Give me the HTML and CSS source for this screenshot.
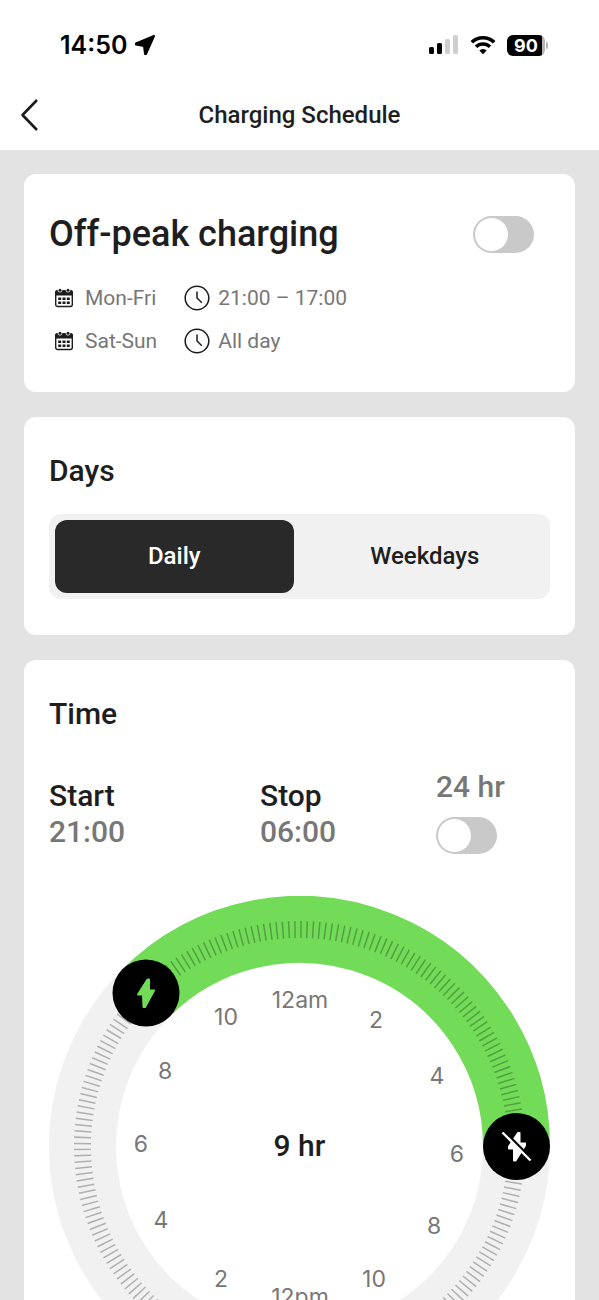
FILE: index.html
```html
<!DOCTYPE html>
<html lang="en">
<head>
<meta charset="utf-8">
<meta name="viewport" content="width=device-width, initial-scale=1">
<title>Charging Schedule</title>
<link rel="stylesheet" href="styles.css">
</head>
<body>
<div class="app">
  <header class="top">
    <div class="status">
      <div class="status-side">
        <span class="clock">14:50</span>
        <svg class="location" viewBox="0 0 20 20" aria-hidden="true"><path d="M19 1 1 8.500v1L9 11l1 8h1z"/></svg>
      </div>
      <div class="status-side">
        <svg class="signal" viewBox="0 0 30 20" aria-hidden="true">
          <rect x="0" y="12" width="5" height="7" rx="1.500"/>
          <rect x="8" y="8" width="5" height="11" rx="1.500"/>
          <rect class="faint" x="16" y="4" width="5" height="15" rx="1.500"/>
          <rect class="faint" x="24" y="0" width="5" height="19" rx="1.500"/>
        </svg>
        <svg class="wifi" viewBox="0 0 26 20" aria-hidden="true">
          <path class="arc" d="M1.800 7.300a16 16 0 0 1 22.400 0M6 11.800a10 10 0 0 1 14 0"/>
          <path d="M13 19.300l-3.700-3.800a5.300 5.300 0 0 1 7.400 0z"/>
        </svg>
        <span class="battery"><span class="battery-level">90</span></span>
      </div>
    </div>
    <nav class="nav">
      <button class="back" type="button" aria-label="Back">
        <svg viewBox="0 0 18 34" aria-hidden="true"><path d="M17 2 2.500 17 17 32"/></svg>
      </button>
      <h1 class="nav-title">Charging Schedule</h1>
    </nav>
  </header>

  <main class="content">
    <section class="card offpeak">
      <div class="offpeak-head">
        <label class="offpeak-title" for="offpeak">Off-peak charging</label>
        <input class="switch" type="checkbox" role="switch" id="offpeak">
      </div>
      <div class="rates">
        <span class="rate"><svg class="calendar" viewBox="0 0 20 20" aria-hidden="true"><use href="#calendar"/></svg>Mon-Fri</span>
        <span class="rate"><svg class="watch" viewBox="0 0 26 26" aria-hidden="true"><use href="#watch"/></svg>21:00 – 17:00</span>
        <span class="rate"><svg class="calendar" viewBox="0 0 20 20" aria-hidden="true"><use href="#calendar"/></svg>Sat-Sun</span>
        <span class="rate"><svg class="watch" viewBox="0 0 26 26" aria-hidden="true"><use href="#watch"/></svg>All day</span>
      </div>
    </section>

    <section class="card days">
      <h2 class="heading">Days</h2>
      <div class="segments">
        <label class="segment"><input class="segment-input" type="radio" name="days" checked>Daily</label>
        <label class="segment"><input class="segment-input" type="radio" name="days">Weekdays</label>
      </div>
    </section>

    <section class="card time">
      <h2 class="heading">Time</h2>
      <div class="times">
        <div class="moment">Start<span class="value">21:00</span></div>
        <div class="moment">Stop<span class="value">06:00</span></div>
        <div class="allday">
          <label class="value" for="allday">24 hr</label>
          <input class="switch" type="checkbox" role="switch" id="allday">
        </div>
      </div>
      <svg class="dial" viewBox="0 0 501 501" role="img" aria-label="Charging from 21:00 to 06:00">
        <circle class="track" cx="250.500" cy="250.500" r="217"/>
        <path class="active" d="M97 97A217 217 0 0 1 467.500 250.500"/>
        <circle class="ticks" cx="250.500" cy="250.500" r="217" pathLength="2250"/>
        <g class="hours">
          <text x="251" y="112">12am</text>
          <text x="327" y="132">2</text>
          <text x="388" y="188">4</text>
          <text x="408" y="266">6</text>
          <text x="385" y="338">8</text>
          <text x="325" y="391">10</text>
          <text x="251" y="409">12pm</text>
          <text x="172" y="391">2</text>
          <text x="112" y="332">4</text>
          <text x="92" y="256">6</text>
          <text x="116" y="183">8</text>
          <text x="177" y="129">10</text>
        </g>
        <text class="total" x="250.500" y="260">9 hr</text>
        <g transform="translate(97 97)">
          <circle r="33.500"/>
          <path class="bolt on" d="M1.500 -13.500 -8 1.500H-3L-2.500 14H-1L8 -2.500H3V-13.500z"/>
        </g>
        <g transform="translate(467.500 250.500)">
          <circle r="33.500"/>
          <path class="bolt off" d="M1.500 -13.500 -7.500 0V2H-2.500V14H-1L8.500 -1V-3H3V-13.500z"/>
          <path class="slash-gap" d="M-12 -15 16 13"/>
          <path class="slash" d="M-14 -14 14 14"/>
        </g>
      </svg>
    </section>
  </main>
</div>

<svg class="symbols" aria-hidden="true">
  <symbol id="calendar" viewBox="0 0 20 20">
    <rect x="1.700" y="3" width="16.600" height="15.500" rx="2" fill="none" stroke="#1c1c1c" stroke-width="1.400"/>
    <path d="M1 7.500V4.500a2.500 2.500 0 0 1 2.500-2.500h13a2.500 2.500 0 0 1 2.500 2.500v3z" fill="#1c1c1c"/>
    <circle cx="6" cy="2.200" r="2.200" fill="#fff"/>
    <circle cx="14" cy="2.200" r="2.200" fill="#fff"/>
    <circle cx="6" cy="2.200" r="1.500" fill="#1c1c1c"/>
    <circle cx="14" cy="2.200" r="1.500" fill="#1c1c1c"/>
    <path d="M4.200 10.800H7.200M8.500 10.800H11.500M12.800 10.800H15.800M4.200 14.800H7.200M8.500 14.800H11.500M12.800 14.800H15.800" stroke="#1c1c1c" stroke-width="2.600"/>
  </symbol>
  <symbol id="watch" viewBox="0 0 26 26">
    <circle cx="13" cy="13" r="11.800" fill="none" stroke="#1c1c1c" stroke-width="1.500"/>
    <path d="M13 6.500V13l4.800 4.800" fill="none" stroke="#1c1c1c" stroke-width="1.500"/>
  </symbol>
</svg>
</body>
</html>
```
FILE: styles.css
```css
* { box-sizing: border-box; }

body {
  margin: 0;
  background: #e3e3e3;
  color: #1e1e1e;
  font-family: Roboto, Inter, sans-serif;
}

.app {
  display: flex;
  flex-direction: column;
  height: 100vh;
}

.top { background: #fff; }

.status {
  display: flex;
  justify-content: space-between;
  align-items: center;
  height: 80px;
  padding: 10px 54px 0 60px;
  color: #000;
  font-family: Inter, sans-serif;
}

.status-side { display: flex; align-items: center; }
.clock { font-size: 25px; font-weight: 600; line-height: 32px; }
.location { width: 20px; height: 20px; margin-left: 8px; stroke: #000; stroke-width: 2; stroke-linejoin: round; }
.signal { width: 30px; height: 20px; }
.faint { fill: #cfcfcf; }
.wifi { width: 26px; height: 20px; margin: 0 11px; }
.arc { fill: none; stroke: #000; stroke-width: 3.600; }

.battery {
  position: relative;
  width: 38px;
  height: 21px;
  border-radius: 6px;
  background: linear-gradient(90deg, #000 35px, #b5b5b5 35px);
}

.battery::after {
  content: "";
  position: absolute;
  top: 7px;
  left: 39px;
  width: 2px;
  height: 7px;
  border-radius: 0 2px 2px 0;
  background: #b5b5b5;
}

.battery-level {
  display: block;
  color: #fff;
  font-size: 18px;
  font-weight: 700;
  line-height: 21px;
  text-align: center;
}

.nav {
  display: grid;
  grid-template-columns: 38px 1fr 38px;
  align-items: center;
  height: 70px;
}

.back {
  display: flex;
  justify-content: flex-end;
  padding: 0;
  border: 0;
  background: none;
}

.back svg { width: 18px; height: 34px; }
.back path { fill: none; stroke: #1c1c1c; stroke-width: 2.600; stroke-linejoin: round; }
.nav-title { margin: 0; font-size: 24px; font-weight: 500; line-height: 32px; text-align: center; }

.content {
  flex: 1;
  min-height: 0;
  display: flex;
  flex-direction: column;
  gap: 25px;
  padding: 24px;
  overflow-y: auto;
  scrollbar-width: none;
}

.card {
  flex: none;
  padding: 36px 25px;
  border-radius: 12px;
  background: #fff;
}

.offpeak { padding-bottom: 35px; }

.offpeak-head {
  display: flex;
  justify-content: space-between;
  align-items: center;
  padding-right: 16px;
}

.offpeak-title { font-size: 36px; font-weight: 500; line-height: 48px; }

.switch {
  appearance: none;
  flex: none;
  width: 61px;
  height: 37px;
  margin: 0;
  padding: 2px;
  border-radius: 19px;
  background: #c9c9c9;
}

.switch::before {
  content: "";
  display: block;
  width: 33px;
  height: 33px;
  border-radius: 50%;
  background: #fff;
}

.switch:checked { background: #72dc58; }
.switch:checked::before { margin-left: auto; }

.rates {
  display: grid;
  grid-template-columns: max-content max-content;
  gap: 11px 27px;
  margin-top: 24px;
  padding: 0 5px;
  color: #777;
  font-size: 21px;
  line-height: 32px;
}

.rate { display: flex; align-items: center; }
.calendar { width: 20px; height: 20px; margin-right: 11px; }
.watch { width: 26px; height: 26px; margin-right: 8px; }

.heading { margin: 0; font-size: 30px; font-weight: 500; line-height: 36px; }

.segments {
  display: grid;
  grid-template-columns: 1fr 1fr;
  gap: 12px;
  margin-top: 25px;
  padding: 6px;
  border-radius: 12px;
  background: #f1f1f1;
}

.segment {
  border-radius: 12px;
  font-size: 24px;
  font-weight: 500;
  line-height: 73px;
  text-align: center;
}

.segment:has(:checked) { background: #292929; color: #fff; }
.segment-input { position: absolute; appearance: none; margin: 0; }

.times {
  display: grid;
  grid-template-columns: 211fr 176fr 114fr;
  align-items: end;
  margin-top: 37px;
  font-size: 30px;
  font-weight: 500;
  line-height: 36px;
}

.moment { padding-bottom: 4px; }
.value { display: block; color: #777; }
.allday .switch { display: block; margin-top: 12px; }

.dial { display: block; width: 100%; margin-top: 42px; }
.track { fill: none; stroke: #f1f1f1; stroke-width: 67; }
.active { fill: none; stroke: #72dc58; stroke-width: 67; }
.ticks { fill: none; stroke: #000; stroke-opacity: .27; stroke-width: 17; stroke-dasharray: 2.500 7.500; stroke-dashoffset: 1.250; }
.hours { fill: #777; font-family: Inter, sans-serif; font-size: 23px; text-anchor: middle; }
.total { fill: #1e1e1e; font-size: 30px; font-weight: 500; text-anchor: middle; }
.bolt { stroke-width: 2; stroke-linejoin: round; }
.on { fill: #72dc58; stroke: #72dc58; }
.off { fill: #fff; stroke: #fff; }
.slash { stroke: #fff; stroke-width: 2.400; }
.slash-gap { stroke: #000; stroke-width: 2.400; }

.symbols { position: absolute; width: 0; height: 0; }
```
